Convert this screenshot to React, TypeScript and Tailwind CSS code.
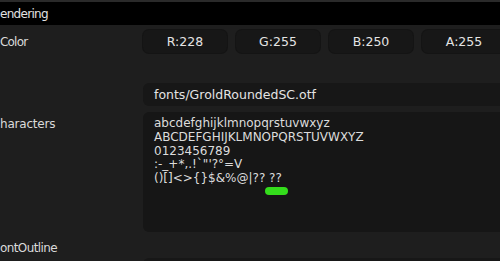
import React from "react";

const font = { fontFamily: '"DejaVu Sans", "Liberation Sans", sans-serif' };

export default function App() {
  const chans = ["R:228", "G:255", "B:250", "A:255"];
  return (
    <div
      className="w-[500px] h-[261px] overflow-hidden bg-[#1e1e1e] text-[#dadada] text-[12px] leading-[14px]"
      style={font}
    >
      <div className="h-[2px] bg-[#2a2a2a]" />
      <div className="h-[23px] bg-black flex items-center text-[12px] tracking-[-0.7px] text-[#e2e2e2]">
        <span className="whitespace-nowrap">endering</span>
      </div>

      <div className="flex mt-[5px]">
        <div className="w-[143px] shrink-0 pt-[5px] text-[12px] tracking-[-0.8px]">Color</div>
        <div className="flex gap-[9px]">
          {chans.map((c) => (
            <div
              key={c}
              className="w-[84px] shrink-0 h-[23px] rounded-[6px] bg-[#171717] shadow-[0_0_0_1px_#141414] flex items-center justify-center text-[12.5px] text-[#e4e4e4]"
            >
              {c}
            </div>
          ))}
        </div>
      </div>

      <div className="flex mt-[30px]">
        <div className="w-[143px] shrink-0" />
        <div className="flex-1 h-[23px] rounded-l-[6px] bg-[#171717] flex items-center pl-[11px] text-[12.5px] text-[#e4e4e4]">
          fonts/GroldRoundedSC.otf
        </div>
      </div>

      <div className="flex mt-[6px]">
        <div className="w-[143px] shrink-0 pt-[5px] text-[12px] tracking-[-0.2px]">haracters</div>
        <div className="relative flex-1 h-[120px] rounded-l-[6px] bg-[#161616] pl-[11px] pt-[5px] text-[12px] leading-[13.8px] text-[#dcdcdc] whitespace-pre">
          <div>abcdefghijklmnopqrstuvwxyz</div>
          <div>ABCDEFGHIJKLMNOPQRSTUVWXYZ</div>
          <div>0123456789</div>
          <div>{":-_+*,.!`\"'?°=V"}</div>
          <div>{"()[]<>{}$&%@|?? ??"}</div>
          <div className="absolute left-[122px] top-[75px] w-[23px] h-[8px] rounded-full bg-[#34dd1c]" />
        </div>
      </div>

      <div className="flex mt-[9px]">
        <div className="w-[143px] shrink-0 text-[12px] tracking-[-0.6px]">ontOutline</div>
      </div>
      <div className="flex mt-[3px]">
        <div className="w-[143px] shrink-0" />
        <div className="flex-1 h-[23px] rounded-l-[6px] bg-[#171717]" />
      </div>
    </div>
  );
}
